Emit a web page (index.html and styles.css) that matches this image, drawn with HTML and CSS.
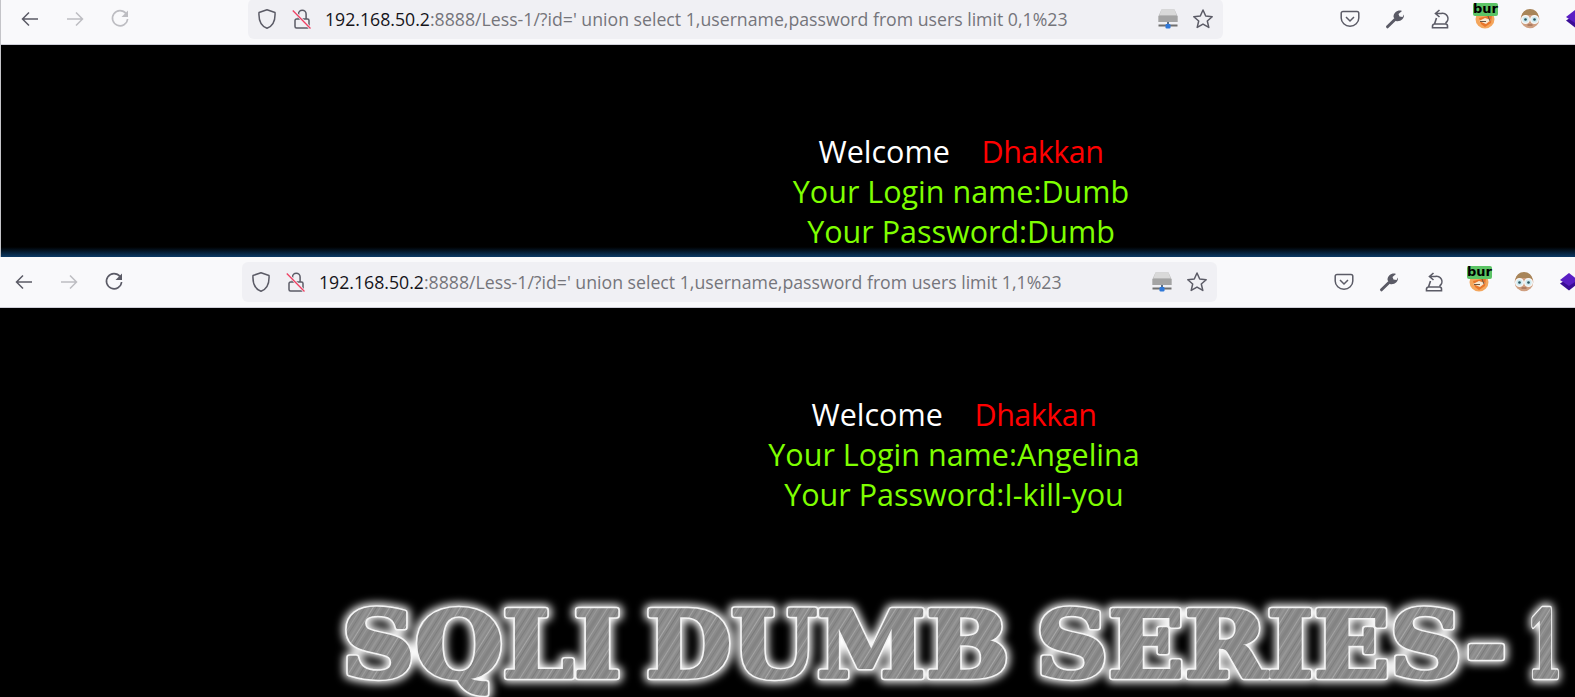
FILE: index.html
```html
<!DOCTYPE html>
<html lang="en">
<head>
<meta charset="utf-8">
<title>SQLI DUMB SERIES-1</title>
<link rel="stylesheet" href="styles.css">
</head>
<body>
<svg class="sprite" aria-hidden="true">
  <symbol id="i-back" viewBox="0 0 20 20"><path d="M18 10H2.500M9 3.500 2.500 10 9 16.500" fill="none" stroke="currentColor" stroke-width="1.500"/></symbol>
  <symbol id="i-forward" viewBox="0 0 20 20"><path d="M2 10h15.500M11 3.500l6.500 6.500-6.500 6.500" fill="none" stroke="currentColor" stroke-width="1.500"/></symbol>
  <symbol id="i-reload" viewBox="0 0 20 20"><path d="M16 4.500A7.600 7.600 0 1 0 17.600 10" fill="none" stroke="currentColor" stroke-width="1.600"/><path d="M18 1.500V8h-6.500z" fill="currentColor"/></symbol>
  <symbol id="i-shield" viewBox="0 0 20 20"><path d="M10 .8 18 3.500c.5 8-2 13.500-8 15.800C4 17 1.500 11.500 2 3.500z" fill="none" stroke="currentColor" stroke-width="1.500" stroke-linejoin="round"/></symbol>
  <symbol id="i-lock" viewBox="0 0 20 20"><path d="M6.500 10V5a3.800 3.800 0 0 1 7.600 0v5M3 11.500A1.500 1.500 0 0 1 4.500 10h11a1.500 1.500 0 0 1 1.500 1.500v6a1.500 1.500 0 0 1-1.500 1.500h-11A1.500 1.500 0 0 1 3 17.500z" fill="none" stroke="#5b5b66" stroke-width="1.500"/><path d="M1.500 2 18.500 19.500" stroke="#f0f0f4" stroke-width="2.800"/><path d="M.8 1.500 18.500 19.500" stroke="#ee3f62" stroke-width="1.300"/></symbol>
  <symbol id="i-drive" viewBox="0 0 20 20"><path d="M3.500 .5h13L19.500 7v6H.5V7z" fill="#b9b9b9"/><path d="M3.500 .5h13L18.500 6h-17z" fill="#d9d9d9"/><rect x=".5" y="7" width="19" height="6" fill="#a4a4a4"/><rect x="9" y="13" width="2" height="3" fill="#5b6f86"/><rect x=".5" y="15.500" width="19" height="2" fill="#6f6f6f"/><rect x="7.500" y="15" width="5" height="4.500" rx="1.200" fill="#2f78d8"/></symbol>
  <symbol id="i-star" viewBox="0 0 20 20"><path d="m10 1 2.700 6 6.500.7-4.900 4.300 1.500 6.400L10 15.100 4.200 18.400 5.700 12 .8 7.700 7.300 7z" fill="none" stroke="currentColor" stroke-width="1.500" stroke-linejoin="round"/></symbol>
  <symbol id="i-pocket" viewBox="0 0 20 20"><path d="M3 2.500h14A1.800 1.800 0 0 1 18.800 4.300V9a8.800 8.200 0 0 1-17.600 0V4.300A1.800 1.800 0 0 1 3 2.500z" fill="none" stroke="currentColor" stroke-width="1.500"/><path d="m6 8 4 4 4-4" fill="none" stroke="currentColor" stroke-width="1.500"/></symbol>
  <symbol id="i-wrench" viewBox="0 0 20 20"><path d="M2.500 17.800 10 10.500" stroke="currentColor" stroke-width="3" stroke-linecap="round"/><path d="M8.500 8C8.500 3.500 13 .5 17 2l-3.500 3 1 2.500 3 .5 1.500-2.500c.5 4-3.500 7.500-8 6.500z" fill="currentColor"/></symbol>
  <symbol id="i-tamper" viewBox="0 0 20 20"><path d="M6 4.500h5a5.300 5.300 0 0 1 4.500 9.500M9.500 1 5.500 4.500l4 3.500M6.500 9 4.500 15M2.500 18.800v-1.800a2 2 0 0 1 2-2h11a2 2 0 0 1 2 2v1.800z" fill="none" stroke="currentColor" stroke-width="1.600"/></symbol>
  <symbol id="i-fox" viewBox="0 0 20 20"><circle cx="10" cy="10" r="9.500" fill="#f4a65c"/><path d="M4 9 17 6l-1 8-6 4-4-3z" fill="#e9762b"/><path d="M4 12l6-3 6 2-5 4z" fill="#f6e7d0"/><path d="M5 12.500h6M13 7l2 5" stroke="#6b5644" stroke-width="1"/></symbol>
  <symbol id="i-face" viewBox="0 0 20 20"><circle cx="10" cy="10" r="9.300" fill="#cf9f80"/><path d="M1.500 8a8.500 8 0 0 1 17 0c-3-2.500-5.500-2-8.500-2S4.500 5.500 1.500 8z" fill="#a88559"/><circle cx="5.500" cy="10.500" r="3.800" fill="#cfeaf0" stroke="#f6f6f6" stroke-width="1.400"/><circle cx="14.500" cy="10.500" r="3.800" fill="#cfeaf0" stroke="#f6f6f6" stroke-width="1.400"/><circle cx="5.500" cy="10.500" r="1.300" fill="#2a5560"/><circle cx="14.500" cy="10.500" r="1.300" fill="#2a5560"/><path d="M7.500 16h5" stroke="#8c5a44" stroke-width="1"/></symbol>
  <symbol id="i-stack" viewBox="0 0 20 20"><path d="M1 11.500 10 6l9 5.500-9 7z" fill="#3a0d96"/><path d="M10 1 19 8l-9 6-9-6z" fill="#5a1ec4"/></symbol>
</svg>

<section class="window window-first">
  <div class="toolbar">
    <button class="nav"><svg class="ico"><use href="#i-back"/></svg></button>
    <button class="nav nav-forward"><svg class="ico"><use href="#i-forward"/></svg></button>
    <button class="nav nav-reload is-dim"><svg class="ico"><use href="#i-reload"/></svg></button>
    <div class="urlbar">
      <svg class="ico ico-shield"><use href="#i-shield"/></svg>
      <svg class="ico ico-lock"><use href="#i-lock"/></svg>
      <span class="url"><span class="host">192.168.50.2</span>:8888/Less-1/?id=' union select 1,username,password from users limit 0,1%23</span>
      <svg class="ico ico-drive"><use href="#i-drive"/></svg>
      <svg class="ico"><use href="#i-star"/></svg>
    </div>
    <div class="addons">
      <svg class="ico"><use href="#i-pocket"/></svg>
      <svg class="ico"><use href="#i-wrench"/></svg>
      <svg class="ico"><use href="#i-tamper"/></svg>
      <span class="burp"><svg class="ico"><use href="#i-fox"/></svg><span class="burp-tag">bur</span></span>
      <svg class="ico"><use href="#i-face"/></svg>
      <svg class="ico"><use href="#i-stack"/></svg>
    </div>
  </div>
  <p class="message"><span class="welcome">Welcome&nbsp;&nbsp;&nbsp;&nbsp;</span><span class="brand">Dhakkan</span><br>Your Login name:Dumb<br>Your Password:Dumb</p>
</section>

<section class="window window-second">
  <div class="toolbar">
    <button class="nav"><svg class="ico"><use href="#i-back"/></svg></button>
    <button class="nav nav-forward"><svg class="ico"><use href="#i-forward"/></svg></button>
    <button class="nav nav-reload"><svg class="ico"><use href="#i-reload"/></svg></button>
    <div class="urlbar">
      <svg class="ico ico-shield"><use href="#i-shield"/></svg>
      <svg class="ico ico-lock"><use href="#i-lock"/></svg>
      <span class="url"><span class="host">192.168.50.2</span>:8888/Less-1/?id=' union select 1,username,password from users limit 1,1%23</span>
      <svg class="ico ico-drive"><use href="#i-drive"/></svg>
      <svg class="ico"><use href="#i-star"/></svg>
    </div>
    <div class="addons">
      <svg class="ico"><use href="#i-pocket"/></svg>
      <svg class="ico"><use href="#i-wrench"/></svg>
      <svg class="ico"><use href="#i-tamper"/></svg>
      <span class="burp"><svg class="ico"><use href="#i-fox"/></svg><span class="burp-tag">bur</span></span>
      <svg class="ico"><use href="#i-face"/></svg>
      <svg class="ico"><use href="#i-stack"/></svg>
    </div>
  </div>
  <p class="message"><span class="welcome">Welcome&nbsp;&nbsp;&nbsp;&nbsp;</span><span class="brand">Dhakkan</span><br>Your Login name:Angelina<br>Your Password:I-kill-you</p>
  <svg class="banner" viewBox="0 0 1240 112" role="img" aria-label="SQLI DUMB SERIES-1">
    <defs>
      <pattern id="brushed" width="37" height="37" patternUnits="userSpaceOnUse" patternTransform="rotate(-58)">
        <rect width="37" height="37" fill="#8b8b8b"/>
        <rect y="1" width="37" height="1" fill="#9c9c9c"/>
        <rect y="4" width="37" height="1" fill="#7e7e7e"/>
        <rect y="7" width="37" height="2" fill="#949494"/>
        <rect y="11" width="37" height="1" fill="#a8a8a8"/>
        <rect y="14" width="37" height="1" fill="#7a7a7a"/>
        <rect y="17" width="37" height="1" fill="#999"/>
        <rect y="20" width="37" height="3" fill="#838383"/>
        <rect y="25" width="37" height="1" fill="#a3a3a3"/>
        <rect y="28" width="37" height="1" fill="#808080"/>
        <rect y="31" width="37" height="2" fill="#979797"/>
        <rect y="35" width="37" height="1" fill="#7c7c7c"/>
      </pattern>
      <filter id="glow" x="-5%" y="-30%" width="110%" height="160%"><feGaussianBlur stdDeviation="4"/></filter>
      <g id="banner-word">
        <text x="12" y="92" font-size="92" textLength="279" lengthAdjust="spacingAndGlyphs">SQLI</text>
        <text x="316" y="92" font-size="92" textLength="363" lengthAdjust="spacingAndGlyphs">DUMB</text>
        <text x="706" y="92" font-size="92" textLength="471" lengthAdjust="spacingAndGlyphs">SERIES-</text>
        <text x="1197" y="92" font-size="92" textLength="35" lengthAdjust="spacingAndGlyphs">1</text>
      </g>
    </defs>
    <use href="#banner-word" class="banner-glow" filter="url(#glow)"/>
    <use href="#banner-word" class="banner-edge"/>
    <use href="#banner-word" class="banner-face"/>
  </svg>
</section>
</body>
</html>
```
FILE: styles.css
```css
* { box-sizing: border-box; }
html, body { margin: 0; padding: 0; overflow: hidden; background: #000; }
body { width: 1575px; height: 697px; font-family: "Open Sans", "Noto Sans", sans-serif; }
.sprite { display: none; }

.window { width: 1575px; overflow: hidden; background: #000; }
.window-first { height: 257px; position: relative; border-left: 1px solid #c4c4c8; }
.window-first::after {
  content: ""; position: absolute; left: 0; right: 0; bottom: 0; height: 10px;
  background: linear-gradient(#00000000, #0b3a66);
}
.window-first .toolbar { margin-top: -6px; padding-left: 19px; }
.window-second { height: 440px; }
.window-second .toolbar { padding-left: 14px; }

.toolbar {
  height: 51px; display: flex; align-items: center;
  background: #f9f9fb; color: #5b5b66;
  border-bottom: 1px solid #cfcfd8;
}
.ico { width: 20px; height: 20px; flex: none; display: block; }
.nav { width: 45px; height: 40px; flex: none; padding: 0; border: 0; background: none; color: inherit; display: flex; align-items: center; }
.nav-forward { color: #bdbdc2; }
.nav-reload { width: 138px; }
.is-dim { color: #bdbdc2; }

.urlbar {
  width: 975px; height: 40px; border-radius: 6px; flex: none;
  background: #f0f0f4; display: flex; align-items: center;
  padding: 0 10px 0 9px;
}
.ico-shield { margin-right: 15px; }
.ico-lock { margin-right: 13px; }
.url { flex: 1; min-width: 0; font-size: 17.700px; color: #75757b; white-space: nowrap; overflow: hidden; }
.host { color: #15141a; }
.ico-drive { margin-right: 15px; }

.addons { display: flex; align-items: center; gap: 25px; flex: none; margin-left: 117px; }
.burp { position: relative; display: block; width: 20px; height: 20px; }
.burp-tag {
  position: absolute; left: -2px; top: -6px; width: 25px; height: 13px;
  background: #5cc466; border-radius: 2px; color: #000;
  font: bold 13px/12px "DejaVu Sans", sans-serif; text-align: center;
}

.message {
  margin: 0; padding: 86px 0 0 345px; width: 1575px;
  font-family: "Open Sans", "Noto Sans", sans-serif;
  font-size: 30.500px; line-height: 40px; text-align: center; color: #7fff00;
}
.window-second .message { padding-left: 333px; }
.welcome { color: #fff; }
.brand { color: #f00; letter-spacing: -.5px; }

.banner { display: block; width: 1240px; height: 112px; margin: 71px 0 0 330px; overflow: visible; }
#banner-word text { font-family: "DejaVu Serif", serif; font-weight: 700; }
.banner-glow { fill: #fff; stroke: #fff; stroke-width: 11px; stroke-linejoin: round; }
.banner-edge { fill: #f4f4f4; stroke: #f4f4f4; stroke-width: 6.500px; stroke-linejoin: round; }
.banner-face { fill: url(#brushed); stroke: url(#brushed); stroke-width: 3.500px; stroke-linejoin: round; }
```
